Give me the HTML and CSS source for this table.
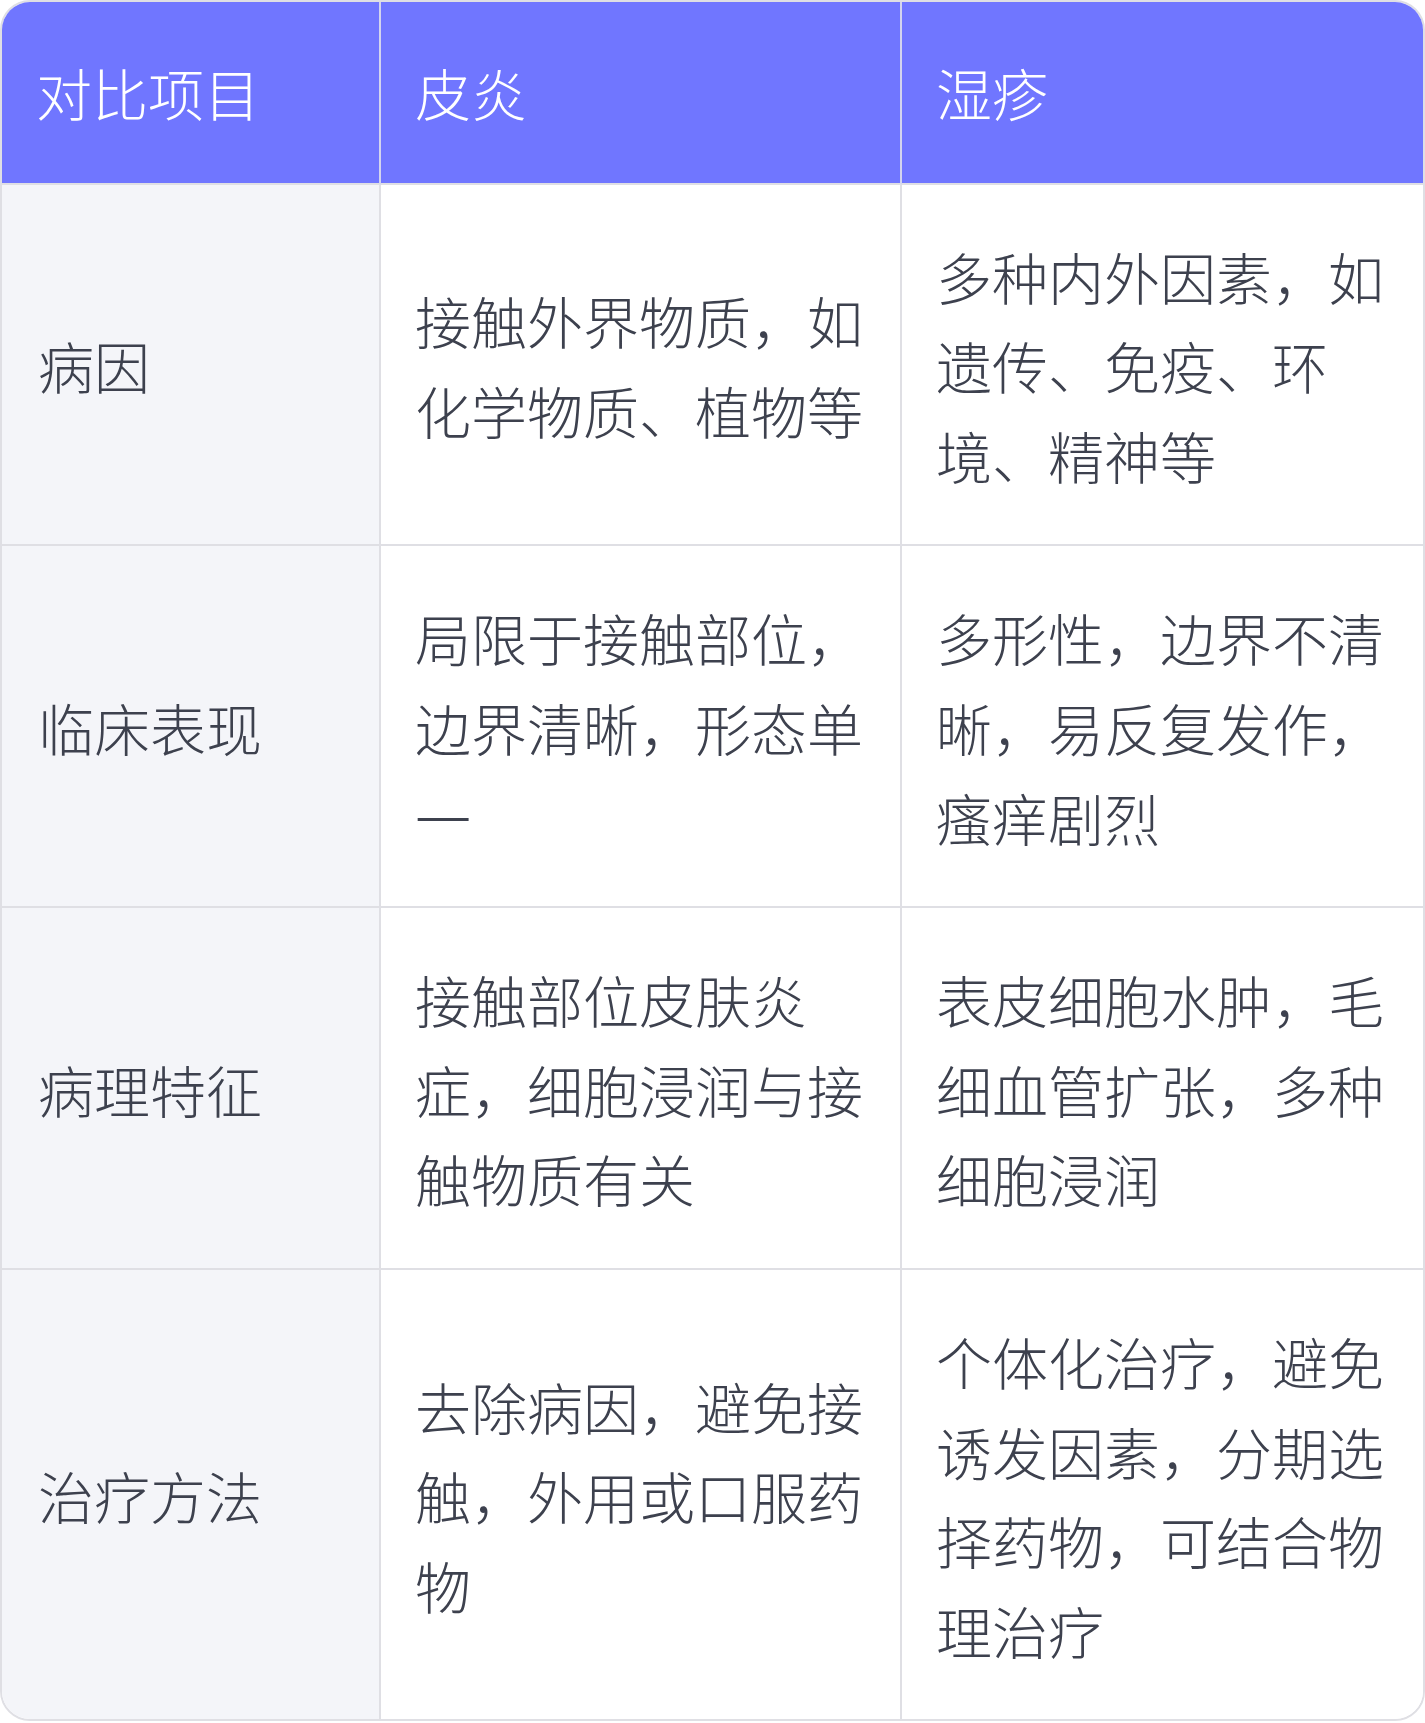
FILE: index.html
```html
<!DOCTYPE html>
<html lang="zh-CN">
<head>
<meta charset="utf-8">
<title>皮炎与湿疹对比</title>
<link rel="stylesheet" href="styles.css">
</head>
<body>
<div class="wrap">
  <table class="cmp">
    <colgroup>
      <col class="c1">
      <col class="c2">
      <col class="c3">
    </colgroup>
    <thead>
      <tr>
        <th>对比项目</th>
        <th>皮炎</th>
        <th>湿疹</th>
      </tr>
    </thead>
    <tbody>
      <tr>
        <td class="label">病因</td>
        <td>接触外界物质，如化学物质、植物等</td>
        <td>多种内外因素，如遗传、免疫、环境、精神等</td>
      </tr>
      <tr>
        <td class="label">临床表现</td>
        <td>局限于接触部位，边界清晰，形态单一</td>
        <td>多形性，边界不清晰，易反复发作，瘙痒剧烈</td>
      </tr>
      <tr>
        <td class="label">病理特征</td>
        <td>接触部位皮肤炎症，细胞浸润与接触物质有关</td>
        <td>表皮细胞水肿，毛细血管扩张，多种细胞浸润</td>
      </tr>
      <tr>
        <td class="label">治疗方法</td>
        <td>去除病因，避免接触，外用或口服药物</td>
        <td>个体化治疗，避免诱发因素，分期选择药物，可结合物理治疗</td>
      </tr>
    </tbody>
  </table>
</div>
</body>
</html>
```
FILE: styles.css
```css
html, body {
  margin: 0;
  padding: 0;
  background: #ffffff;
}

body {
  font-family: "Noto Sans CJK SC", "Noto Sans", sans-serif;
  font-weight: 300;
}

.wrap {
  width: 1425px;
  box-sizing: border-box;
  border: 2px solid #dfdfe4;
  border-radius: 30px;
  overflow: hidden;
}

.cmp {
  width: 100%;
  border-collapse: separate;
  border-spacing: 0;
  table-layout: fixed;
  font-size: 56px;
  line-height: 89.6px;
}

.c1 { width: 379px; }
.c2 { width: 521px; }
.c3 { width: 521px; }

.cmp th,
.cmp td {
  text-align: left;
  vertical-align: middle;
  padding: 46px 34px 45px 34px;
  border-right: 2px solid #dfdfe4;
  border-bottom: 2px solid #dfdfe4;
  font-weight: 300;
}

.cmp th {
  padding-top: 45px;
  padding-bottom: 46px;
  background: #7076ff;
  color: #ffffff;
  border-right-color: #d3d4ee;
}

.cmp th:last-child,
.cmp td:last-child {
  border-right: none;
}

.cmp tbody tr:last-child td {
  border-bottom: none;
}

.cmp td {
  color: #3d414e;
  background: #ffffff;
}

.cmp td.label {
  background: #f4f5f9;
  padding-left: 36px;
}
```
